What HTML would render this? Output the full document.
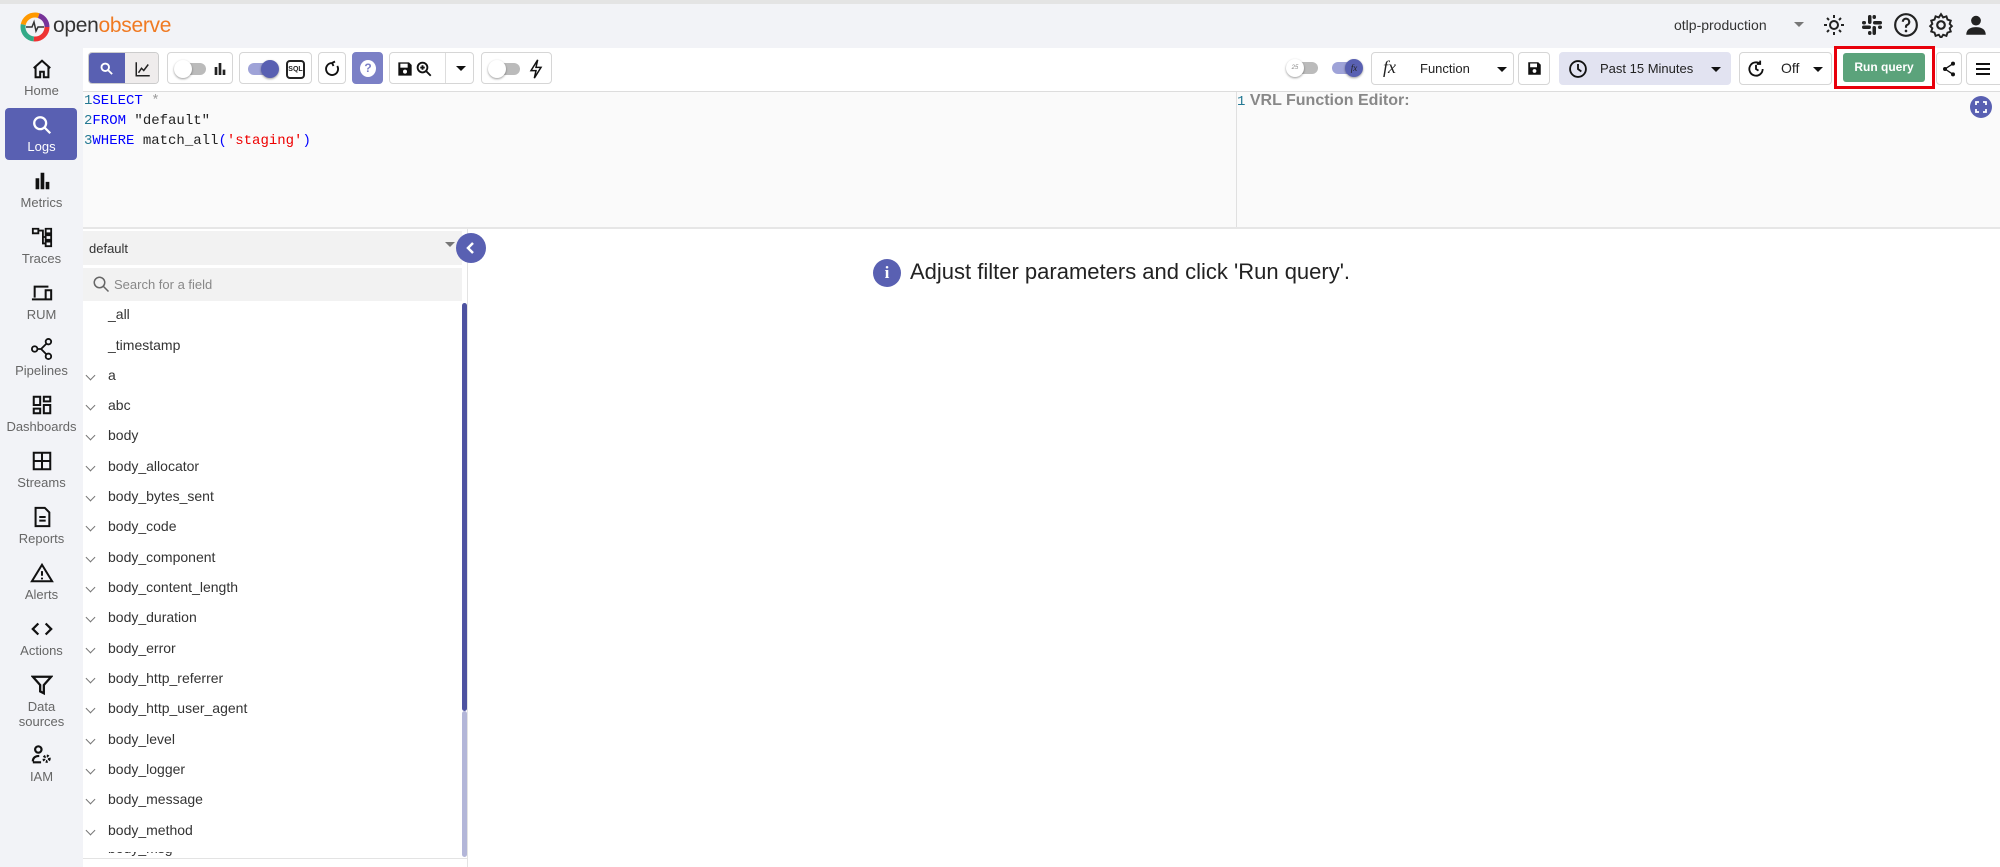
<!DOCTYPE html>
<html><head><meta charset="utf-8">
<style>
*{box-sizing:border-box;margin:0;padding:0}
body{width:2000px;height:867px;overflow:hidden;background:#fff;font-family:"Liberation Sans",sans-serif;color:#222;position:relative}
.a{position:absolute}
.btn{position:absolute;border:1px solid #d6d6d6;border-radius:4px;background:#fff}
.nav{position:absolute;left:0;width:83px;text-align:center;font-size:13px;color:#666}
.nav svg{display:block;margin:0 auto 3px}
.fld{position:absolute;left:108px;font-size:14px;color:#333}
.chev{position:absolute;left:87px;width:7px;height:7px;border-right:1.5px solid #777;border-bottom:1.5px solid #777;transform:rotate(45deg)}
.mono{font-family:"Liberation Mono",monospace;font-size:14px;position:absolute;left:84px}
.tg{position:absolute;width:30px;height:12px;border-radius:6px;background:#bbb}
.tg i{position:absolute;top:-3px;width:18px;height:18px;border-radius:50%;background:#fff;box-shadow:0 1px 2px rgba(0,0,0,.4)}
</style></head><body>
<div class="a" style="left:0;top:0;width:2000px;height:4px;background:#e4e4e4"></div>
<div class="a" style="left:0;top:4px;width:2000px;height:44px;background:#f2f3f7"></div>
<svg class="a" style="left:20px;top:12px" width="30" height="30" viewBox="0 0 30 30"><circle cx="15" cy="15" r="12" fill="none" stroke="#e33" stroke-width="5" stroke-dasharray="20 60"/><circle cx="15" cy="15" r="12" fill="none" stroke="#3a8" stroke-width="5" stroke-dasharray="20 60" stroke-dashoffset="-20"/><circle cx="15" cy="15" r="12" fill="none" stroke="#f90" stroke-width="5" stroke-dasharray="20 60" stroke-dashoffset="-40"/><circle cx="15" cy="15" r="12" fill="none" stroke="#739" stroke-width="5" stroke-dasharray="16 60" stroke-dashoffset="-60"/><path d="M6 15h6l2-5 2 9 2-4h6" fill="none" stroke="#333" stroke-width="1.5"/></svg>
<div class="a" style="left:53px;top:14px;font-size:21px;letter-spacing:-.3px"><span style="color:#333">open</span><span style="color:#f07a22">observe</span></div>
<div class="a" style="left:1674px;top:17px;font-size:14px;color:#333">otlp-production</div>
<div class="a" style="left:1794px;top:22px;border:5px solid transparent;border-top-color:#777"></div>
<svg class="a" style="left:1822px;top:13px" width="24" height="24" viewBox="0 0 24 24"><circle cx="12" cy="12" r="4" fill="none" stroke="#222" stroke-width="2"/><path d="M12 2v3M12 19v3M2 12h3M19 12h3M5 5l2 2M17 17l2 2M5 19l2-2M17 7l2-2" stroke="#222" stroke-width="2"/></svg>
<svg class="a" style="left:1860px;top:13px" width="24" height="24" viewBox="0 0 24 24"><g fill="#222"><rect x="8" y="2" width="3.5" height="9" rx="1.7"/><rect x="12.5" y="13" width="3.5" height="9" rx="1.7"/><rect x="2" y="12.5" width="9" height="3.5" rx="1.7"/><rect x="13" y="8" width="9" height="3.5" rx="1.7"/><rect x="2" y="8" width="4" height="3.5" rx="1.7"/><rect x="18" y="12.5" width="4" height="3.5" rx="1.7"/><rect x="12.5" y="2" width="3.5" height="4" rx="1.7"/><rect x="8" y="18" width="3.5" height="4" rx="1.7"/></g></svg>
<svg class="a" style="left:1893px;top:12px" width="26" height="26" viewBox="0 0 24 24"><circle cx="12" cy="12" r="10" fill="none" stroke="#222" stroke-width="2"/><path d="M9 9a3 3 0 1 1 4 3c-1 .5-1 1-1 2.5" fill="none" stroke="#222" stroke-width="2"/><circle cx="12" cy="17.5" r="1.2" fill="#222"/></svg>
<svg class="a" style="left:1928px;top:12px" width="26" height="26" viewBox="0 0 24 24"><circle cx="12" cy="12" r="3.5" fill="none" stroke="#222" stroke-width="2"/><path d="M12 2l2 3 3-1 1 3 3 1-1 3 2 2-2 2 1 3-3 1-1 3-3-1-2 3-2-3-3 1-1-3-3-1 1-3-2-2 2-2-1-3 3-1 1-3 3 1z" fill="none" stroke="#222" stroke-width="1.8"/></svg>
<svg class="a" style="left:1963px;top:12px" width="26" height="26" viewBox="0 0 24 24"><circle cx="12" cy="8" r="4.5" fill="#222"/><path d="M3 21c0-5 4-7 9-7s9 2 9 7z" fill="#222"/></svg>

<div class="a" style="left:0;top:48px;width:83px;height:819px;background:#f2f3f7"></div>
<div class="a" style="left:5px;top:108px;width:72px;height:52px;background:#5960b2;border-radius:4px"></div>
<div class="nav" style="top:58px"><svg width="22" height="22" viewBox="0 0 24 24"><path d="M3 11L12 3l9 8M5 10v11h5v-6h4v6h5V10" fill="none" stroke="#111" stroke-width="2.2"/></svg>Home</div>
<div class="nav" style="top:114px;color:#fff"><svg width="22" height="22" viewBox="0 0 24 24"><circle cx="10" cy="10" r="6.5" fill="none" stroke="#fff" stroke-width="2.5"/><path d="M15 15l6 6" stroke="#fff" stroke-width="2.5"/></svg>Logs</div>
<div class="nav" style="top:170px"><svg width="22" height="22" viewBox="0 0 24 24"><path d="M5 9h4v12H5zM10.5 3h4v18h-4zM16 13h4v8h-4z" fill="#111"/></svg>Metrics</div>
<div class="nav" style="top:226px"><svg width="22" height="22" viewBox="0 0 24 24"><path d="M2 3h6v5H2zM9 5h4v14h3M16 3h6v5h-6zM16 10h6v5h-6zM16 17h6v5h-6zM13 12h3" fill="none" stroke="#111" stroke-width="2"/></svg>Traces</div>
<div class="nav" style="top:282px"><svg width="24" height="22" viewBox="0 0 24 24"><path d="M4 17V5h15M1 19h14M16 9h6v10h-6z" fill="none" stroke="#111" stroke-width="2.2"/></svg>RUM</div>
<div class="nav" style="top:338px"><svg width="24" height="22" viewBox="0 0 24 24"><circle cx="4" cy="12" r="3" fill="none" stroke="#111" stroke-width="2"/><circle cx="19" cy="4" r="3" fill="none" stroke="#111" stroke-width="2"/><circle cx="19" cy="20" r="3" fill="none" stroke="#111" stroke-width="2"/><path d="M7 12h4l6-6M11 12l6 6" stroke="#111" stroke-width="2" fill="none"/></svg>Pipelines</div>
<div class="nav" style="top:394px"><svg width="22" height="22" viewBox="0 0 24 24"><path d="M3 3h7v9H3zM14 3h7v5h-7zM14 12h7v9h-7zM3 16h7v5H3z" fill="none" stroke="#111" stroke-width="2.2"/></svg>Dashboards</div>
<div class="nav" style="top:450px"><svg width="22" height="22" viewBox="0 0 24 24"><path d="M3 3h18v18H3zM12 3v18M3 12h18" fill="none" stroke="#111" stroke-width="2.2"/></svg>Streams</div>
<div class="nav" style="top:506px"><svg width="22" height="22" viewBox="0 0 24 24"><path d="M5 2h10l5 5v15H5zM9 12h7M9 16h7" fill="none" stroke="#111" stroke-width="2.2"/></svg>Reports</div>
<div class="nav" style="top:562px"><svg width="24" height="22" viewBox="0 0 24 24"><path d="M12 3L1 21h22z" fill="none" stroke="#111" stroke-width="2.2"/><path d="M12 10v5M12 17v2" stroke="#111" stroke-width="2.2"/></svg>Alerts</div>
<div class="nav" style="top:618px"><svg width="24" height="22" viewBox="0 0 24 24"><path d="M8 6l-6 6 6 6M16 6l6 6-6 6" fill="none" stroke="#111" stroke-width="2.5"/></svg>Actions</div>
<div class="nav" style="top:674px;line-height:15px"><svg width="22" height="22" viewBox="0 0 24 24"><path d="M2 3h20l-8 9v9l-4-2v-7z" fill="none" stroke="#111" stroke-width="2.5"/></svg>Data<br>sources</div>
<div class="nav" style="top:744px"><svg width="24" height="22" viewBox="0 0 24 24"><circle cx="8" cy="6" r="3.5" fill="none" stroke="#111" stroke-width="2.4"/><path d="M2 19c0-4 3-6 7-6M2 20h9" fill="none" stroke="#111" stroke-width="2.4"/><circle cx="17" cy="16" r="3" fill="none" stroke="#111" stroke-width="3" stroke-dasharray="2 1.5"/></svg>IAM</div>

<div class="a" style="left:83px;top:91px;width:1917px;height:1px;background:#ddd"></div>
<div class="btn" style="left:88px;top:52px;width:71px;height:32px;overflow:hidden;border-color:#ccc">
 <div class="a" style="left:0;top:0;width:36px;height:32px;background:#5960b2"></div>
 <div class="a" style="left:36px;top:0;width:35px;height:32px;background:#efecec"></div>
 <svg class="a" style="left:10px;top:8px" width="15" height="15" viewBox="0 0 24 24"><circle cx="10" cy="10" r="6" fill="none" stroke="#fff" stroke-width="3"/><path d="M15 15l6 6" stroke="#fff" stroke-width="3"/></svg>
 <svg class="a" style="left:45px;top:7px" width="18" height="18" viewBox="0 0 24 24"><path d="M3 3v18h18M6 17l4-6 3 3 6-8" fill="none" stroke="#222" stroke-width="2"/></svg>
</div>
<div class="btn" style="left:167px;top:52px;width:66px;height:32px"><div class="tg" style="left:8px;top:10px"><i style="left:-2px"></i></div><svg class="a" style="left:44px;top:8px" width="16" height="16" viewBox="0 0 24 24"><path d="M4 9h4v12H4zM10 3h4v18h-4zM16 13h4v8h-4z" fill="#222"/></svg></div>
<div class="btn" style="left:239px;top:52px;width:73px;height:32px"><div class="tg" style="left:8px;top:10px;background:#9fa3d8"><i style="left:13px;background:#5960b2"></i></div><div class="a" style="left:46px;top:7px;width:19px;height:19px;border:2px solid #222;border-radius:4px;font-size:7px;font-weight:bold;text-align:center;line-height:15px">SQL</div></div>
<div class="btn" style="left:318px;top:52px;width:28px;height:32px"><svg class="a" style="left:4px;top:7px" width="18" height="18" viewBox="0 0 24 24"><path d="M12 4a8 8 0 1 0 7 4M12 4l4-2M12 4l2 4" fill="none" stroke="#111" stroke-width="2.5"/></svg></div>
<div class="btn" style="left:352px;top:52px;width:31px;height:32px;background:#7b80c6;border-color:#7b80c6"><div class="a" style="left:7px;top:7px;width:16px;height:17px;border-radius:50%;background:#fff;color:#7b80c6;font-size:12px;font-weight:bold;text-align:center;line-height:17px">?</div></div>
<div class="btn" style="left:389px;top:52px;width:85px;height:32px"><svg class="a" style="left:7px;top:8px" width="16" height="16" viewBox="0 0 24 24"><path d="M2 2h16l4 4v16H2z" fill="#111"/><rect x="5" y="4" width="11" height="6" fill="#fff"/><circle cx="12" cy="16" r="3" fill="#fff"/></svg><svg class="a" style="left:25px;top:7px" width="18" height="18" viewBox="0 0 24 24"><circle cx="10" cy="10" r="6.5" fill="none" stroke="#111" stroke-width="2.5"/><path d="M15 15l6 6M10 7v6M7 10h6" stroke="#111" stroke-width="2.5"/></svg><div class="a" style="left:55px;top:0;width:1px;height:30px;background:#ddd"></div><div class="a" style="left:66px;top:13px;border:5px solid transparent;border-top-color:#111"></div></div>
<div class="btn" style="left:481px;top:52px;width:71px;height:32px"><div class="tg" style="left:8px;top:10px"><i style="left:-2px"></i></div><svg class="a" style="left:46px;top:6px" width="16" height="20" viewBox="0 0 16 24"><path d="M10 1L2 14h6l-2 9 8-13H8z" fill="none" stroke="#111" stroke-width="1.8"/></svg></div>

<div class="tg" style="left:1288px;top:62px"><i style="left:-2px;font-size:6px;text-align:center;line-height:18px;color:#888">25</i></div>
<div class="tg" style="left:1332px;top:62px;background:#9fa3d8"><i style="left:13px;background:#5960b2;color:#222;font-size:9px;font-style:italic;text-align:center;line-height:18px;font-family:'Liberation Serif'">fx</i></div>
<div class="btn" style="left:1371px;top:52px;width:143px;height:33px"><span class="a" style="left:11px;top:4px;font-family:'Liberation Serif',serif;font-style:italic;font-size:18px">fx</span><span class="a" style="left:48px;top:8px;font-size:13px">Function</span><div class="a" style="left:125px;top:14px;border:5px solid transparent;border-top-color:#111"></div></div>
<div class="btn" style="left:1518px;top:52px;width:32px;height:33px"><svg class="a" style="left:8px;top:8px" width="15" height="15" viewBox="0 0 24 24"><path d="M2 2h16l4 4v16H2z" fill="#111"/><rect x="5" y="4" width="11" height="6" fill="#fff"/><circle cx="12" cy="16" r="3" fill="#fff"/></svg></div>
<div class="btn" style="left:1559px;top:52px;width:172px;height:33px;background:#e2e3f1;border-color:#e2e3f1"><svg class="a" style="left:8px;top:6px" width="20" height="20" viewBox="0 0 24 24"><circle cx="12" cy="12" r="9.5" fill="none" stroke="#111" stroke-width="2.2"/><path d="M12 6v6l4 3" fill="none" stroke="#111" stroke-width="2.2"/></svg><span class="a" style="left:40px;top:8px;font-size:13px">Past 15 Minutes</span><div class="a" style="left:151px;top:14px;border:5px solid transparent;border-top-color:#111"></div></div>
<div class="btn" style="left:1739px;top:52px;width:93px;height:33px"><svg class="a" style="left:6px;top:6px" width="20" height="20" viewBox="0 0 24 24"><path d="M20 12a8 8 0 1 1-3-6.2M17 2v4h-4M12 7v5l3 2" fill="none" stroke="#111" stroke-width="2.2"/></svg><span class="a" style="left:41px;top:7px;font-size:14px">Off</span><div class="a" style="left:73px;top:14px;border:5px solid transparent;border-top-color:#111"></div></div>
<div class="a" style="left:1834px;top:46px;width:101px;height:43px;border:3px solid #e8000b"></div>
<div class="a" style="left:1843px;top:53px;width:82px;height:29px;background:#5ba37b;border-radius:3px;color:#fff;font-size:12px;font-weight:bold;text-align:center;line-height:29px">Run query</div>
<div class="btn" style="left:1936px;top:52px;width:26px;height:33px"><svg class="a" style="left:4px;top:8px" width="16" height="16" viewBox="0 0 24 24"><circle cx="18" cy="4" r="3" fill="#111"/><circle cx="6" cy="12" r="3" fill="#111"/><circle cx="18" cy="20" r="3" fill="#111"/><path d="M18 4L6 12l12 8" fill="none" stroke="#111" stroke-width="2"/></svg></div>
<div class="btn" style="left:1966px;top:52px;width:40px;height:33px"><div class="a" style="left:9px;top:10px;width:14px;height:2px;background:#111;box-shadow:0 5px 0 #111,0 10px 0 #111"></div></div>

<div class="a" style="left:83px;top:92px;width:1917px;height:136px;background:#fafafa"></div>
<div class="a" style="left:1236px;top:92px;width:1px;height:136px;background:#e0e0e0"></div>
<div class="a" style="left:83px;top:227px;width:1917px;height:2px;background:#e6e6e6"></div>
<div class="mono" style="top:93px"><span style="color:#237893">1</span><span style="color:#00f">SELECT</span> <span style="color:#999">*</span></div>
<div class="mono" style="top:113px"><span style="color:#237893">2</span><span style="color:#00f">FROM</span> "default"</div>
<div class="mono" style="top:133px"><span style="color:#237893">3</span><span style="color:#00f">WHERE</span> match_all<span style="color:#00f">(</span><span style="color:#e00">'staging'</span><span style="color:#00f">)</span></div>
<div class="a" style="left:1237px;top:92px;font-size:16px;font-weight:bold;color:#888"><span style="font-family:'Liberation Mono';font-size:14px;font-weight:normal;color:#237893">1</span> VRL Function Editor:</div>
<div class="a" style="left:1970px;top:96px;width:22px;height:22px;border-radius:50%;background:#5960b2"><svg width="22" height="22" viewBox="0 0 22 22"><path d="M6 9V6h3M13 6h3v3M16 13v3h-3M9 16H6v-3" fill="none" stroke="#fff" stroke-width="1.8"/></svg></div>

<div class="a" style="left:83px;top:229px;width:385px;height:638px;border-right:1px solid #e3e3e3"></div>
<div class="a" style="left:83px;top:231px;width:379px;height:34px;background:#f2f2f2"></div>
<div class="a" style="left:89px;top:241px;font-size:13px;color:#333">default</div>
<div class="a" style="left:445px;top:242px;border:5px solid transparent;border-top-color:#777"></div>
<div class="a" style="left:456px;top:233px;width:30px;height:30px;border-radius:50%;background:#5960b2"><svg width="30" height="30" viewBox="0 0 30 30"><path d="M17 10l-5 5 5 5" fill="none" stroke="#fff" stroke-width="2.5"/></svg></div>
<div class="a" style="left:83px;top:268px;width:379px;height:33px;background:#f2f2f2"></div>
<svg class="a" style="left:92px;top:275px" width="18" height="18" viewBox="0 0 24 24"><circle cx="10" cy="10" r="7" fill="none" stroke="#666" stroke-width="2"/><path d="M15 15l7 7" stroke="#666" stroke-width="2"/></svg>
<div class="a" style="left:114px;top:277px;font-size:13px;color:#888">Search for a field</div>
<div class="a" style="left:462px;top:303px;width:5px;height:408px;background:#4d52a0;border-radius:3px"></div>
<div class="a" style="left:462px;top:711px;width:5px;height:146px;background:#b3b6d8;border-radius:3px"></div>
<div class="a" style="left:83px;top:858px;width:385px;height:1px;background:#e3e3e3"></div>

<div class="fld" style="top:306px">_all</div>
<div class="fld" style="top:337px">_timestamp</div>
<div class="chev" style="top:372px"></div><div class="fld" style="top:367px">a</div>
<div class="chev" style="top:402px"></div><div class="fld" style="top:397px">abc</div>
<div class="chev" style="top:432px"></div><div class="fld" style="top:427px">body</div>
<div class="chev" style="top:463px"></div><div class="fld" style="top:458px">body_allocator</div>
<div class="chev" style="top:493px"></div><div class="fld" style="top:488px">body_bytes_sent</div>
<div class="chev" style="top:523px"></div><div class="fld" style="top:518px">body_code</div>
<div class="chev" style="top:554px"></div><div class="fld" style="top:549px">body_component</div>
<div class="chev" style="top:584px"></div><div class="fld" style="top:579px">body_content_length</div>
<div class="chev" style="top:614px"></div><div class="fld" style="top:609px">body_duration</div>
<div class="chev" style="top:645px"></div><div class="fld" style="top:640px">body_error</div>
<div class="chev" style="top:675px"></div><div class="fld" style="top:670px">body_http_referrer</div>
<div class="chev" style="top:705px"></div><div class="fld" style="top:700px">body_http_user_agent</div>
<div class="chev" style="top:736px"></div><div class="fld" style="top:731px">body_level</div>
<div class="chev" style="top:766px"></div><div class="fld" style="top:761px">body_logger</div>
<div class="chev" style="top:796px"></div><div class="fld" style="top:791px">body_message</div>
<div class="chev" style="top:827px"></div><div class="fld" style="top:822px">body_method</div>
<div class="fld" style="top:852px;height:6px;overflow:hidden"><span style="position:relative;top:-12px">body_msg</span></div>

<div class="a" style="left:873px;top:259px;width:28px;height:28px;border-radius:50%;background:#5960b2;color:#fff;font-weight:bold;font-size:17px;text-align:center;line-height:28px;font-family:'Liberation Serif',serif">i</div>
<div class="a" style="left:910px;top:259px;font-size:22px;color:#222">Adjust filter parameters and click 'Run query'.</div>
</body></html>
